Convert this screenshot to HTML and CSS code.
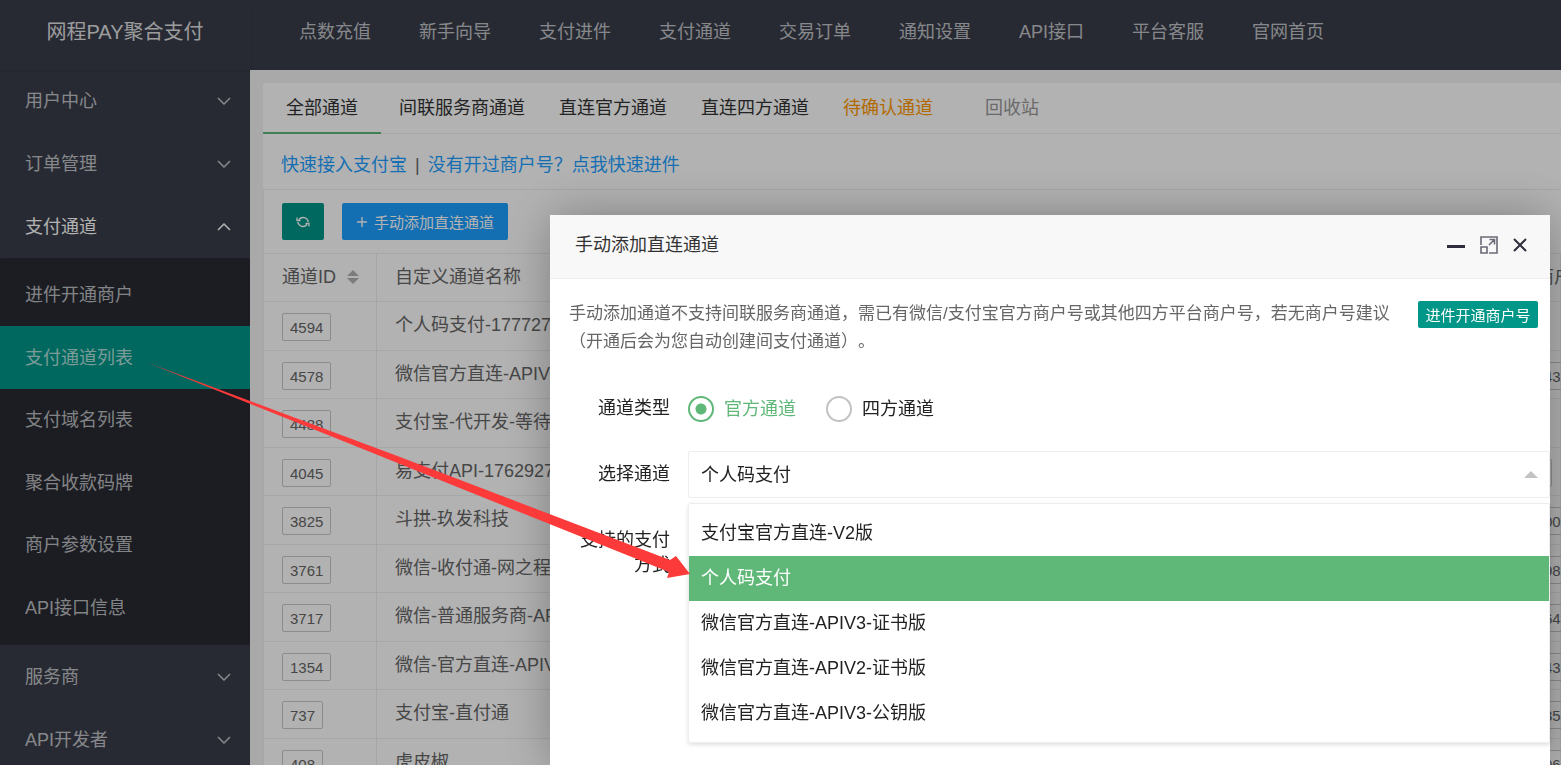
FILE: index.html
```html
<!DOCTYPE html>
<html lang="zh-CN">
<head>
    <meta charset="UTF-8">
    <meta name="viewport" content="width=device-width, initial-scale=1.0">
    <title>支付通道列表</title>
    <link rel="stylesheet" href="styles.css">
</head>
<body>
    <div class="header">
        <div class="logo">网程PAY聚合支付</div>
        <nav class="top-nav">
            <a href="#">点数充值</a>
            <a href="#">新手向导</a>
            <a href="#">支付进件</a>
            <a href="#">支付通道</a>
            <a href="#">交易订单</a>
            <a href="#">通知设置</a>
            <a href="#">API接口</a>
            <a href="#">平台客服</a>
            <a href="#">官网首页</a>
        </nav>
    </div>

    <div class="container">
        <div class="sidebar">
            <ul class="menu">
                <li><a href="#">用户中心<svg class="chevron" viewBox="0 0 14 8"><path d="M1 1l6 6 6-6"/></svg></a></li>
                <li><a href="#">订单管理<svg class="chevron" viewBox="0 0 14 8"><path d="M1 1l6 6 6-6"/></svg></a></li>
                <li class="open">
                    <a href="#">支付通道<svg class="chevron" viewBox="0 0 14 8"><path d="M1 7l6-6 6 6"/></svg></a>
                    <ul class="submenu">
                        <li><a href="#">进件开通商户</a></li>
                        <li class="active"><a href="#">支付通道列表</a></li>
                        <li><a href="#">支付域名列表</a></li>
                        <li><a href="#">聚合收款码牌</a></li>
                        <li><a href="#">商户参数设置</a></li>
                        <li><a href="#">API接口信息</a></li>
                    </ul>
                </li>
                <li><a href="#">服务商<svg class="chevron" viewBox="0 0 14 8"><path d="M1 1l6 6 6-6"/></svg></a></li>
                <li><a href="#">API开发者<svg class="chevron" viewBox="0 0 14 8"><path d="M1 1l6 6 6-6"/></svg></a></li>
            </ul>
        </div>

        <div class="main-content">
            <div class="card">
                <div class="tabs">
                    <a href="#" class="active">全部通道</a>
                    <a href="#">间联服务商通道</a>
                    <a href="#">直连官方通道</a>
                    <a href="#">直连四方通道</a>
                    <a href="#" class="pending">待确认通道</a>
                    <a href="#" class="recycle">回收站</a>
                </div>

                <div class="quick-links">
                    <a href="#">快速接入支付宝</a>
                    <span>|</span>
                    <a href="#">没有开过商户号？点我快速进件</a>
                </div>

                <div class="table-view">
                    <div class="toolbar">
                        <button type="button" class="btn btn-refresh" aria-label="刷新">
                            <svg width="14" height="14" viewBox="0 0 14 14"><path d="M3 4.500a5.200 5.200 0 0 1 9.200 2.500M11 9.500a5.200 5.200 0 0 1-9.200-2.500M1 2.500v3h3.500M13 11.500v-3H9.500" stroke-width="1.300"/></svg>
                        </button>
                        <button type="button" class="btn btn-add">
                            <svg width="12" height="12" viewBox="0 0 12 12"><path d="M6 1v10M1 6h10"/></svg>手动添加直连通道
                        </button>
                    </div>
                    <table>
                        <thead>
                            <tr>
                                <th class="col-id">通道ID<svg class="sort" width="12" height="16" viewBox="0 0 12 16"><path d="M0 7l6-6 6 6zM0 9h12l-6 6z"/></svg></th>
                                <th>自定义通道名称</th>
                                <th class="col-merchant">商户号</th>
                            </tr>
                        </thead>
                        <tbody>
                            <tr><td><span class="tag">4594</span></td><td>个人码支付-1777273</td><td></td></tr>
                            <tr><td><span class="tag">4578</span></td><td>微信官方直连-APIV3</td><td><span class="tag">43</span></td></tr>
                            <tr><td><span class="tag">4488</span></td><td>支付宝-代开发-等待</td><td></td></tr>
                            <tr><td><span class="tag">4045</span></td><td>易支付API-1762927</td><td><span class="tag"></span></td></tr>
                            <tr><td><span class="tag">3825</span></td><td>斗拱-玖发科技</td><td><span class="tag">00</span></td></tr>
                            <tr><td><span class="tag">3761</span></td><td>微信-收付通-网之程</td><td><span class="tag">98</span></td></tr>
                            <tr><td><span class="tag">3717</span></td><td>微信-普通服务商-API</td><td><span class="tag">64</span></td></tr>
                            <tr><td><span class="tag">1354</span></td><td>微信-官方直连-APIV3</td><td><span class="tag">43</span></td></tr>
                            <tr><td><span class="tag">737</span></td><td>支付宝-直付通</td><td><span class="tag">35</span></td></tr>
                            <tr><td><span class="tag">408</span></td><td>虎皮椒</td><td><span class="tag">06</span></td></tr>
                        </tbody>
                    </table>
                </div>
            </div>
        </div>
    </div>

    <div class="shade"></div>

    <div class="dialog" role="dialog" aria-labelledby="dialog-title">
        <div class="dialog-header">
            <h3 id="dialog-title">手动添加直连通道</h3>
            <div class="dialog-tools">
                <button type="button" aria-label="最小化">
                    <svg width="18" height="18" viewBox="0 0 18 18"><path d="M0 10.500h18" stroke-width="3"/></svg>
                </button>
                <button type="button" aria-label="最大化">
                    <svg class="maximize" width="18" height="18" viewBox="0 0 18 18"><path d="M1 9V1h16v16H9M1 11h6v6H1zM9 9l5-5M9.500 3.500h5v5"/></svg>
                </button>
                <button type="button" aria-label="关闭">
                    <svg width="14" height="16" viewBox="0 0 14 16"><path d="M1 2l12 12M13 2L1 14" stroke-width="2"/></svg>
                </button>
            </div>
        </div>

        <div class="note">
            <div class="note-line">
                <span>手动添加通道不支持间联服务商通道，需已有微信/支付宝官方商户号或其他四方平台商户号，若无商户号建议</span>
                <button type="button" class="btn-open">进件开通商户号</button>
            </div>
            <div>（开通后会为您自动创建间支付通道）。</div>
        </div>

        <form>
            <div class="form-row">
                <span class="form-label">通道类型</span>
                <div class="radios">
                    <label><input type="radio" name="type" value="official" checked><span>官方通道</span></label>
                    <label><input type="radio" name="type" value="third"><span>四方通道</span></label>
                </div>
            </div>
            <div class="form-row">
                <label class="form-label" for="channel">选择通道</label>
                <div class="select-wrap">
                    <select id="channel">
                        <option>支付宝官方直连-V2版</option>
                        <option selected>个人码支付</option>
                        <option>微信官方直连-APIV3-证书版</option>
                        <option>微信官方直连-APIV2-证书版</option>
                        <option>微信官方直连-APIV3-公钥版</option>
                    </select>
                    <svg class="caret" width="14" height="7" viewBox="0 0 14 7"><path d="M0 7l7-7 7 7z"/></svg>
                    <ul class="options" role="listbox" aria-label="选择通道">
                        <li role="option">支付宝官方直连-V2版</li>
                        <li role="option" class="selected" aria-selected="true">个人码支付</li>
                        <li role="option">微信官方直连-APIV3-证书版</li>
                        <li role="option">微信官方直连-APIV2-证书版</li>
                        <li role="option">微信官方直连-APIV3-公钥版</li>
                    </ul>
                </div>
            </div>
            <div class="form-row">
                <span class="form-label methods">支持的支付方式</span>
            </div>
        </form>
    </div>

    <!-- pointer from the menu item to the selected option -->
    <svg class="arrow" width="700" height="600" viewBox="0 0 700 600"><path d="M147 362.500L400 457 670 560 676 556 690 574 667 578 669 572 400 464z"/></svg>
</body>
</html>
```

FILE: styles.css
```css
* {
    box-sizing: border-box;
}
body {
    font-family: "Liberation Sans", "Noto Sans CJK SC", sans-serif;
    font-size: 18px;
    line-height: 24px;
    color: #333;
    margin: 0;
    height: 100vh;
    overflow: hidden;
    background: #f2f2f2;
    text-spacing-trim: space-all;
}
ul {
    list-style: none;
    margin: 0;
    padding: 0;
}
a {
    text-decoration: none;
}
button, select {
    font-family: inherit;
    cursor: pointer;
}
svg {
    fill: none;
    stroke: currentColor;
}

/* header */
.header {
    display: flex;
    height: 70px;
    background: #393d49;
    line-height: 64px;
}
.logo {
    width: 250px;
    flex-shrink: 0;
    text-align: center;
    font-size: 20px;
    color: rgba(255,255,255,0.85);
    box-shadow: 0 1px 2px rgba(0,0,0,0.15);
    z-index: 1;
}
.top-nav {
    display: flex;
    padding-left: 25px;
    white-space: nowrap;
}
.top-nav a {
    padding: 0 24px;
    color: rgba(255,255,255,0.7);
}

/* sidebar */
.container {
    display: flex;
    height: calc(100vh - 70px);
}
.sidebar {
    width: 250px;
    flex-shrink: 0;
    background: #393d49;
    overflow: hidden;
}
.menu a {
    display: flex;
    align-items: center;
    justify-content: space-between;
    height: 63px;
    padding: 0 19px 0 25px;
    color: rgba(255,255,255,0.7);
}
.menu > li:first-child a {
    height: 62px;
}
.menu .open > a {
    color: #fff;
}
.chevron {
    width: 14px;
    height: 8px;
    stroke-width: 1.5;
}
.submenu {
    padding: 6px 0;
    border-radius: 2px;
    background: rgba(0,0,0,0.3);
}
.submenu li:nth-child(odd) a {
    height: 62px;
}
.submenu .active a {
    background: #009688;
}

/* main */
.main-content {
    flex: 1;
    min-width: 0;
    padding: 13px 0 0 13px;
    overflow: hidden;
}
.card {
    background: #fff;
    border-radius: 2px 0 0 0;
}
.tabs {
    display: flex;
    height: 51px;
    line-height: 50px;
    border-bottom: 1px solid #eee;
    white-space: nowrap;
}
.tabs a {
    height: 51px;
    padding: 0 17px;
    color: #333;
}
.tabs .active {
    padding: 0 23px;
    margin-right: 1px;
    border-bottom: 2px solid #5fb878;
}
.tabs .pending {
    color: #ff9800;
}
.tabs .recycle {
    margin-left: 18px;
    color: #999;
}
.quick-links {
    display: flex;
    gap: 8px;
    padding: 19px 18px 12px;
    border-bottom: 1px solid #eee;
    color: #666;
}
.quick-links a {
    color: #1e9fff;
}
.table-view {
    border-left: 1px solid #eee;
}
.toolbar {
    display: flex;
    gap: 18px;
    padding: 13px 18px;
    border-bottom: 1px solid #eee;
}
.btn {
    display: flex;
    align-items: center;
    justify-content: center;
    height: 37px;
    padding: 0 14px;
    border: none;
    border-radius: 2px;
    color: #fff;
    font-size: 15px;
}
.btn-refresh {
    background: #009688;
}
.btn-add {
    gap: 6px;
    background: #1e9fff;
}
.btn-add svg {
    stroke-width: 1.4;
}
table {
    width: 100%;
    table-layout: fixed;
    border-collapse: separate;
    border-spacing: 0;
    color: #666;
    white-space: nowrap;
}
th, td {
    height: 49px;
    padding: 0 18px 2px;
    border-right: 1px solid #eee;
    border-bottom: 1px solid #eee;
    text-align: left;
    font-weight: normal;
}
th, tr:nth-child(even) td {
    height: 48px;
}
.col-id {
    width: 113px;
}
.col-merchant {
    width: 43px;
}
.sort {
    margin-left: 11px;
    vertical-align: -2px;
    fill: #b2b2b2;
    stroke: none;
}
.tag {
    display: inline-block;
    height: 28px;
    margin-top: 4px;
    padding: 0 7px;
    border: 1px solid #c9c9c9;
    border-radius: 2px;
    font-size: 15px;
    line-height: 28px;
    vertical-align: middle;
}

/* dialog */
.shade {
    position: fixed;
    inset: 0;
    background: rgba(0,0,0,0.3);
    z-index: 10;
}
.dialog {
    position: fixed;
    top: 215px;
    left: 550px;
    right: 11px;
    bottom: 0;
    background: #fff;
    border-radius: 2px 2px 0 0;
    box-shadow: 1px 1px 50px rgba(0,0,0,0.3);
    z-index: 11;
}
.dialog-header {
    display: flex;
    align-items: center;
    justify-content: space-between;
    height: 64px;
    padding: 0 23px 3px 25px;
    background: #f8f8f8;
    border-bottom: 1px solid #eee;
}
.dialog-header h3 {
    margin: 0;
    font-size: 18px;
    font-weight: normal;
}
.dialog-tools {
    display: flex;
    align-items: center;
    gap: 15px;
}
.dialog-tools button {
    display: flex;
    padding: 0;
    border: none;
    background: none;
    color: #2e2d3c;
}
.dialog-tools .maximize {
    color: #6b6a76;
    stroke-width: 1.6;
}
.note {
    padding: 21px 12px 0 19px;
    font-size: 17px;
    line-height: 28px;
    color: #666;
}
.note-line {
    display: flex;
    align-items: center;
    justify-content: space-between;
}
.note-line span {
    white-space: nowrap;
}
.btn-open {
    width: 120px;
    height: 27px;
    padding: 0;
    border: none;
    border-radius: 2px;
    background: #009688;
    color: #fff;
    font-size: 15px;
}
form {
    margin-top: 29px;
}
.form-row {
    display: flex;
    min-height: 47px;
    margin-bottom: 19px;
    color: #222;
}
.form-label {
    width: 138px;
    padding: 11px 18px 0 30px;
    text-align: right;
}
.methods {
    line-height: 25px;
}
.radios {
    display: flex;
    align-items: center;
    gap: 30px;
}
.radios label {
    display: flex;
    align-items: center;
    gap: 10px;
}
.radios input {
    appearance: none;
    width: 26px;
    height: 26px;
    margin: 0;
    border: 2px solid #c2c2c2;
    border-radius: 50%;
}
.radios input:checked {
    border-color: #5fb878;
    background: radial-gradient(circle, #5fb878 5px, transparent 6px);
}
.radios input:checked + span {
    color: #5fb878;
}
.select-wrap {
    flex: 1;
    position: relative;
}
.select-wrap select {
    appearance: none;
    width: 100%;
    height: 47px;
    padding: 0 12px;
    border: 1px solid #eee;
    border-radius: 2px;
    background: #fff;
    color: #222;
    font-size: 18px;
}
.caret {
    position: absolute;
    top: 20px;
    right: 12px;
    fill: #c2c2c2;
    stroke: none;
}
.options {
    position: absolute;
    top: 52px;
    left: 0;
    right: 0;
    padding: 7px 0 6px;
    background: #fff;
    border: 1px solid #eee;
    border-radius: 2px;
    box-shadow: 0 2px 4px rgba(0,0,0,0.12);
}
.options li {
    padding: 0 12px;
    line-height: 45px;
}
.options .selected {
    background: #5fb878;
    color: #fff;
}

.arrow {
    position: fixed;
    top: 0;
    left: 0;
    fill: #fc3a3a;
    stroke: none;
    pointer-events: none;
    z-index: 12;
}
```
